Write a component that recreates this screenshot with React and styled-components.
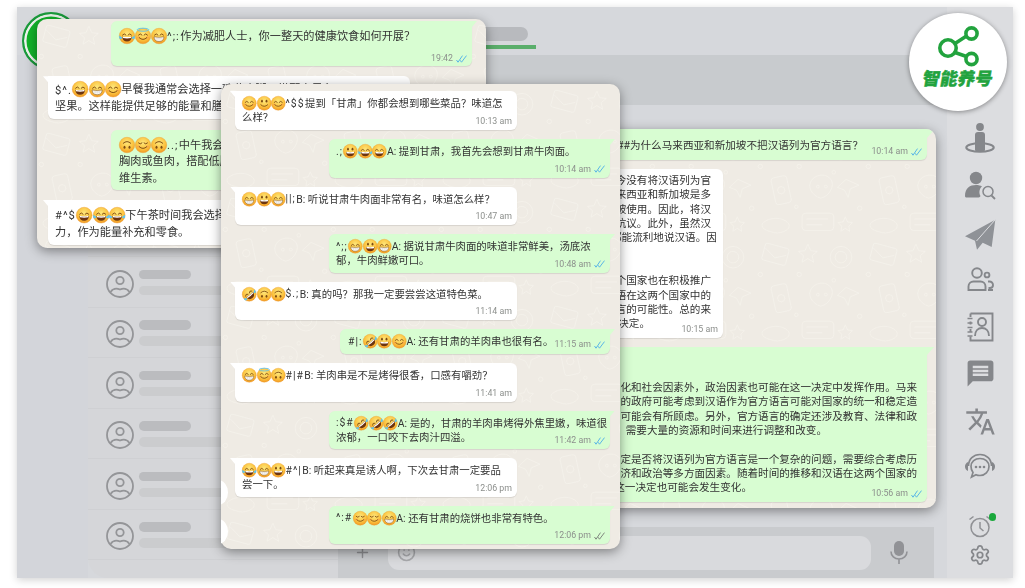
import React from "react";
import styled, { createGlobalStyle } from "styled-components";
import { MdMessage, MdTranslate } from "react-icons/md";
import { Settings, Plus, Smile } from "lucide-react";

const Global = createGlobalStyle`
  html, body { margin: 0; padding: 0; background: #fff; overflow: hidden; }
  * { box-sizing: border-box; }
`;

const Page = styled.div`
  position: relative; width: 1025px; height: 588px; overflow: hidden; background: #fff;
  padding: 7px 12px 10px 17px;
  font-family: Roboto, "Noto Sans CJK SC", sans-serif; color: #333;
`;
const Frame = styled.div`
  display: flex; height: 100%; background: #d6d8dc;
  box-shadow: 0 2px 8px rgba(0,0,0,.18);
`;
const Main = styled.div`display: flex; flex-direction: column; flex: 1; min-width: 0;`;
const TopBar = styled.div`position: relative; height: 48px; flex: none; background: #d6d8dc;`;
const ProfileRing = styled.div`
  position: absolute; left: 5px; top: 5px; width: 58px; height: 58px; border-radius: 50%;
  background: #12b42a; border: 2.500px solid #1b9a3c; box-shadow: inset 0 0 0 2.500px #eef4ef; z-index: 1;
`;
const TitlePill = styled.div`
  position: absolute; left: 420px; top: 20px; width: 91px; height: 14px; border-radius: 7px; background: #b8babe;
`;
const TitleLine = styled.div`
  position: absolute; left: 420px; top: 38px; width: 99px; height: 4px; background: #5aae6b;
`;
const Body = styled.div`display: flex; flex: 1; min-height: 0;`;
const LeftStrip = styled.div`width: 71px; flex: none; background: #d3d5da;`;
const ListPanel = styled.div`
  width: 250px; flex: none; background: #d5d6d9; border-bottom-left-radius: 20px; overflow: hidden;
`;
const Row = styled.div`
  height: 50.500px; display: flex; align-items: center; gap: 5px; padding: 4px 0 0 18px;
  border-bottom: 1px solid #cfd0d3;
`;
const Bars = styled.div`display: flex; flex-direction: column; gap: 6.500px; margin-top: -3px;`;
const NameBar = styled.div`width: 52px; height: 9.500px; border-radius: 5px; background: #bbbcbf;`;
const MsgBar = styled.div`width: 150px; height: 9.500px; border-radius: 5px; background: #cbccce;`;
const ChatPanel = styled.div`display: flex; flex-direction: column; flex: 1; min-width: 0;`;
const ChatHeader = styled.div`height: 50px; flex: none; background: #c8cbce;`;
const ChatSpace = styled.div`flex: 1;`;
const Composer = styled.div`
  height: 51px; flex: none; margin-right: 13px; background: #c9cbce; display: flex; align-items: center;
  padding: 0 20px 0 16px; color: #8f9093;
`;
const Field = styled.div`
  width: 483px; height: 34px; margin-left: 17px; border-radius: 11px; background: #d9dadd; display: flex; align-items: center;
  padding-left: 9px; margin-right: 19px;
`;
const Rail = styled.div`
  width: 66px; flex: none; background: #dcdde0; display: flex; flex-direction: column; align-items: center;
  padding: 115px 0 12px; color: #8a8b8f;
`;
const RailSlot = styled.div`height: 47.300px; flex: none; display: flex; justify-content: center; align-items: flex-start;`;
const RailBottom = styled.div`margin-top: auto; display: flex; flex-direction: column; align-items: center; gap: 6px;`;
const AlarmWrap = styled.div`position: relative; height: 24px; display: flex;`;
const AlarmDot = styled.div`
  position: absolute; right: -4px; top: -1px; width: 7.500px; height: 7.500px; border-radius: 50%; background: #1aa83c;
`;

const LogoBadge = styled.div`
  position: absolute; left: 909px; top: 13px; width: 98px; height: 98px; border-radius: 50%; background: #fff;
  box-shadow: 0 1px 5px rgba(0,0,0,.4); display: flex; flex-direction: column; align-items: center; z-index: 6;
  padding-top: 13px; color: #22a33e;
`;
const LogoText = styled.div`
  margin-top: 1px; font: 900 17.500px/20px "Noto Sans CJK SC", sans-serif; transform: skewX(-10deg); white-space: nowrap;
  -webkit-text-stroke: .4px #22a33e;
`;

const Window = styled.div`
  position: absolute; background: #efebe4; border-radius: 10px; overflow: hidden;
  box-shadow: 0 3px 12px rgba(0,0,0,.42); display: flex; flex-direction: column; filter: blur(.35px);
`;
const WindowA = styled(Window)`
  left: 37px; top: 19px; width: 449px; height: 229px; z-index: 2; padding: 2px 14px 0 5px; gap: 10.300px;
  font-size: 11.200px; line-height: 16.600px;
`;
const WindowB = styled(Window)`
  left: 221px; top: 84px; width: 399px; height: 465px; z-index: 4; padding: 7px 10px 0 10px; gap: 9px;
  font-size: 10.400px; line-height: 14.500px;
`;
const WindowC = styled(Window)`
  left: 540px; top: 129px; width: 396px; height: 379px; z-index: 3; padding: 0 0 0 12px; gap: 9px;
  font-size: 10.600px; line-height: 14.350px;
`;
const WallSvg = styled.svg`position: absolute; inset: 0; width: 100%; height: 100%;`;

const Bubble = styled.div`
  position: relative; flex: none; align-self: ${p => (p.$me ? "flex-end" : "flex-start")};
  width: ${p => p.$w}px; height: ${p => p.$h}px; margin-left: ${p => p.$ml || 0}px;
  margin-right: ${p => p.$mr || 0}px;
  padding: ${p => p.$pt ?? 5}px ${p => p.$pr ?? 7}px 0 ${p => p.$pl ?? 7}px;
  background: ${p => (p.$me ? "#d8fdd2" : "#fff")};
  border-radius: ${p => (p.$me ? "6px 0 6px 6px" : "0 6px 6px 6px")};
  box-shadow: 0 1px 1px rgba(0,0,0,.1);
  white-space: nowrap;
  &::before {
    content: ""; position: absolute; top: 0; width: ${p => p.$tail || 5}px; height: ${p => (p.$tail || 5) + 1}px;
    background: inherit;
    ${p => (p.$me
      ? `left: 100%; clip-path: polygon(0 0, 100% 0, 0 100%);`
      : `right: 100%; clip-path: polygon(0 0, 100% 0, 100% 100%);`)}
  }
`;
const Tag = styled.span`letter-spacing: 1px; margin-right: .5px;`;
const Stamp = styled.div`
  position: absolute; right: 5px; bottom: ${p => p.$b ?? 3}px; display: flex; align-items: center; gap: 3px;
  font: 400 8.800px/11px Roboto, "Noto Sans", sans-serif; color: #8c8f8c;
`;
const Line = styled.div`
  text-align: right; padding-right: ${p => p.$end || 0}px; min-height: 14.350px; white-space: nowrap;
`;
const EmojiSvg = styled.svg`
  display: inline-block; vertical-align: -4px; width: ${p => p.$s}px; height: ${p => p.$s}px; overflow: visible;
`;
const Defs = styled.svg`position: absolute; width: 0; height: 0;`;
const GlyphStub = styled.div`
  position: absolute; left: 209px; width: 19px; height: 25px; border-radius: 50%; background: #fff; z-index: 5;
  top: ${p => p.$top}px; clip-path: inset(0 0 0 12px);
`;

function Wallpaper({ id }) {
  const s = { fill: "none", stroke: "#f5f2ec", strokeWidth: 1 };
  return (
    <WallSvg aria-hidden="true">
      <defs>
        <pattern id={id} width="150" height="150" patternUnits="userSpaceOnUse" patternTransform="scale(.72)">
          <g {...s}>
            <rect x="10" y="12" width="34" height="24" rx="3" transform="rotate(15 27 24)" />
            <path d="M12 18l15 11 15-6" transform="rotate(10 27 24)" />
            <path d="M72 10l4 9 9 1-7 6 2 9-8-5-8 5 2-9-7-6 9-1z" />
            <circle cx="118" cy="28" r="15" />
            <circle cx="118" cy="28" r="8" />
            <rect x="24" y="66" width="22" height="38" rx="4" transform="rotate(-12 35 85)" />
            <circle cx="35" cy="85" r="5" />
            <path d="M78 70c8-8 20-8 26 0s-2 24-14 26c-12-3-20-16-12-26z" />
            <circle cx="86" cy="80" r="2" /><circle cx="97" cy="80" r="2" />
            <path d="M125 70l18 8-12 5-3 12-5-10-10-4z" />
            <path d="M10 130c10-8 26-8 34 0s-8 16-18 14-22-6-16-14z" />
            <path d="M70 125h30M70 133h22" />
            <rect x="64" y="117" width="44" height="24" rx="5" />
            <path d="M124 122l3 7 7 1-5 5 1 7-6-4-6 4 1-7-5-5 7-1z" />
            <circle cx="6" cy="52" r="3" /><circle cx="60" cy="52" r="3" /><circle cx="108" cy="60" r="2.500" />
            <circle cx="56" cy="108" r="2.500" /><circle cx="144" cy="110" r="3" />
          </g>
        </pattern>
      </defs>
      <rect width="100%" height="100%" fill={`url(#${id})`} />
    </WallSvg>
  );
}

function Emoji({ t, s = 14.5 }) {
  const ink = "#7b4a12";
  const eyesUp = <path d="M7 14q3.500-5 7 0M18 14q3.500-5 7 0" fill="none" stroke={ink} strokeWidth="1.900" strokeLinecap="round" />;
  const eyesDown = <path d="M7 12q3.500 4 7 0M18 12q3.500 4 7 0" fill="none" stroke={ink} strokeWidth="1.900" strokeLinecap="round" />;
  const eyesDot = <g fill={ink}><ellipse cx="11" cy="11.500" rx="2" ry="3" /><ellipse cx="21" cy="11.500" rx="2" ry="3" /></g>;
  const teeth = (
    <g>
      <path d="M6 17.500q10 2.400 20 0q-.6 9.500-10 9.500t-10-9.500z" fill="#fff" stroke={ink} strokeWidth="1.100" />
      <path d="M7 21.500h18M12 18.600v7.800M16 18.900v8M20 18.600v7.800" stroke="#c9c3b5" strokeWidth=".8" />
    </g>
  );
  const open = (
    <g>
      <path d="M6.500 17q9.500 2.400 19 0q-.6 10-9.500 10t-9.500-10z" fill="#6d3410" />
      <path d="M7.400 17.200q8.600 2 17.200 0l-.5 3q-8.100 1.600-16.200 0z" fill="#fff" />
    </g>
  );
  const smile = <path d="M8.500 19.500q7.500 7 15 0" fill="none" stroke={ink} strokeWidth="1.900" strokeLinecap="round" />;
  const tears = (
    <g fill="#5fc4ee">
      <path d="M1 15q-2 6 1.500 7t4-2.500z" />
      <path d="M31 15q2 6-1.500 7t-4-2.500z" />
    </g>
  );
  const blush = <g fill="#f58f50" opacity=".55"><ellipse cx="7" cy="19" rx="3" ry="1.800" /><ellipse cx="25" cy="19" rx="3" ry="1.800" /></g>;
  const face = <circle cx="16" cy="16" r="15.500" fill="url(#emojiFace)" stroke="#ea9a2e" strokeWidth=".8" />;
  const parts = {
    grin: <>{eyesUp}{teeth}</>,
    beam: <>{eyesUp}{open}</>,
    grinning: <>{eyesDot}{open}</>,
    smile: <>{blush}{eyesUp}{smile}</>,
    slight: <>{eyesDot}{smile}</>,
    joy: <>{eyesUp}{open}{tears}</>,
    halo: <>{blush}{eyesUp}{smile}<ellipse cx="16" cy="3.500" rx="11.500" ry="3" fill="none" stroke="#5fc4ee" strokeWidth="1.800" /></>,
    upside: <g transform="rotate(180 16 16)">{eyesDot}{smile}</g>,
    relieved: <>{blush}{eyesDown}{smile}</>,
    rofl: <g transform="rotate(-40 16 16)">{eyesUp}{open}{tears}</g>,
  };
  return (
    <EmojiSvg $s={s} viewBox="0 0 32 32" aria-hidden="true">
      {face}
      {parts[t]}
    </EmojiSvg>
  );
}
const Emojis = ({ list, s }) => <>{list.map((t, i) => <Emoji key={i} t={t} s={s} />)}</>;

function Ticks({ gray }) {
  return (
    <svg width="11" height="8" viewBox="0 0 11 8" aria-hidden="true">
      <path d="M.5 5l1.500 2.200L6.500.6M4 5.200l1.500 2L10.500.6" fill="none" stroke={gray ? "#7f867e" : "#5ab6e6"} strokeWidth="1" />
    </svg>
  );
}
const Time = ({ v, me, gray, b }) => (
  <Stamp $b={b}>{v}{me && <Ticks gray={gray} />}</Stamp>
);

const RowAvatar = () => (
  <svg width="28" height="28" viewBox="0 0 28 28" fill="none" stroke="#949598" strokeWidth="1.800" aria-hidden="true">
    <circle cx="14" cy="14" r="13" />
    <circle cx="14" cy="10.500" r="3.700" />
    <path d="M4.500 22c2-3.500 6-4 9.500-2.500 3.500-1.500 7.500-1 9.500 2.500" />
  </svg>
);

const MicGlyph = () => (
  <svg width="18" height="23" viewBox="0 0 18 23" aria-hidden="true">
    <rect x="4" y="0" width="10" height="15" rx="5" fill="#919296" />
    <path d="M1 10.500c0 4.500 3.500 7.500 8 7.500s8-3 8-7.500M9 18v5" fill="none" stroke="#919296" strokeWidth="1.600" />
  </svg>
);
const IconPerson = () => (
  <svg width="32" height="32" viewBox="0 0 32 32" fill="#85878b" aria-hidden="true">
    <circle cx="16" cy="5" r="3.900" />
    <ellipse cx="16" cy="25.500" rx="13.700" ry="4.300" fill="none" stroke="#85878b" strokeWidth="2.100" />
    <path d="M11 13a3 3 0 0 1 3-3h4a3 3 0 0 1 3 3v15a1 1 0 0 1-1 1h-8a1 1 0 0 1-1-1z" />
  </svg>
);
const IconSearchUser = () => (
  <svg width="32" height="32" viewBox="0 0 32 32" fill="#85878b" aria-hidden="true">
    <circle cx="12" cy="9" r="6.200" />
    <path d="M1 27c0-8 5-11 11-11 2.500 0 4.500.5 6 1.500-2.500 2-3.500 6-1.500 9.500-.5 1-1.500 1.500-3 1.500H3c-1.200 0-2-.5-2-1.500z" />
    <circle cx="24" cy="22.500" r="5" fill="none" stroke="#85878b" strokeWidth="1.500" />
    <path d="M27.500 26.500l3.500 3.500" stroke="#85878b" strokeWidth="1.800" fill="none" />
  </svg>
);
const IconSend = () => (
  <svg width="32" height="33" viewBox="0 0 32 33" aria-hidden="true">
    <path d="M31.300 2.700L1 19.300l10 4.400 2 9 5.700-7 9 4.300z" fill="#8f9297" />
    <path d="M31 3L12.500 24" stroke="#dcdde0" strokeWidth="1" />
  </svg>
);
const IconUsers = () => (
  <svg width="32" height="32" viewBox="0 0 32 32" fill="none" stroke="#85878b" strokeWidth="1.900" aria-hidden="true">
    <circle cx="13" cy="9" r="4.800" />
    <circle cx="23" cy="11" r="2.400" />
    <path d="M4.500 26v-3.500a5 5 0 0 1 5-5h7a5 5 0 0 1 5 5V26z" />
    <path d="M24 17.500h1.500a3.500 3.500 0 0 1 3.500 3.500 3 3 0 0 1-3 3h-1.500M24 26h5" />
  </svg>
);
const IconContacts = () => (
  <svg width="32" height="32" viewBox="0 0 32 32" fill="none" stroke="#85878b" strokeWidth="1.900" aria-hidden="true">
    <path d="M6.500 2.500h22v27h-22v-4M6.500 21v-3M6.500 13.500v-3M6.500 6v-3.500" />
    <path d="M3.500 7.500h5M3.500 12h5M3.500 16.500h5M3.500 21h5M3.500 25h5" strokeWidth="1.400" />
    <circle cx="18" cy="11" r="4" />
    <path d="M11 25c0-5 3-8 7-8s7 3 7 8" />
  </svg>
);
const IconHeadset = () => (
  <svg width="32" height="26" viewBox="0 0 32 26" fill="none" stroke="#85878b" strokeWidth="1.700" aria-hidden="true">
    <path d="M4.500 13C4.500 6 9.500 1.500 16 1.500S27.500 6 27.500 13" />
    <path d="M9 19.500c-1.500-2-2-4-2-6C7 8.500 11 5.500 16 5.500s9 3 9 8-4 9-9 9c-1.500 0-3-.3-4-.8L7.500 24z" />
    <path d="M4 9c-2 1-3 2.500-3 4.500S2 17 4 18zM28 9c2 1 3 2.500 3 4.500S30 17 28 18z" fill="#85878b" stroke="none" />
    <g fill="#85878b" stroke="none"><circle cx="12" cy="14" r="1.300" /><circle cx="16" cy="14" r="1.300" /><circle cx="20" cy="14" r="1.300" /></g>
  </svg>
);
const IconAlarm = () => (
  <svg width="24" height="24" viewBox="0 0 24 24" fill="none" stroke="#8f9094" strokeWidth="1.500" aria-hidden="true">
    <circle cx="12" cy="13.500" r="9" />
    <path d="M12 8v6l3.500 3M1.500 5.500L5.500 2.500M22.500 5.500L18.500 2.500" />
  </svg>
);
const ShareMark = () => (
  <svg width="46" height="41" viewBox="0 0 46 41" fill="none" stroke="#22a33e" strokeWidth="3.600" aria-hidden="true">
    <circle cx="13" cy="22" r="8.200" />
    <circle cx="36.500" cy="7.500" r="5.600" />
    <circle cx="36.500" cy="33" r="5.600" />
    <path d="M20 17.500L31.500 10M20 26.500L31.500 30.500" />
  </svg>
);

const listRows = Array.from({ length: 10 });

export default function App() {
  return (
    <Page>
      <Global />
      <Defs aria-hidden="true">
        <defs>
          <radialGradient id="emojiFace" cx="50%" cy="35%" r="70%">
            <stop offset="0" stopColor="#fde67a" />
            <stop offset=".6" stopColor="#fbc23e" />
            <stop offset="1" stopColor="#f08f1e" />
          </radialGradient>
        </defs>
      </Defs>

      <Frame>
        <Main>
          <TopBar>
            <ProfileRing />
            <TitlePill />
            <TitleLine />
          </TopBar>
          <Body>
            <LeftStrip />
            <ListPanel>
              {listRows.map((_, i) => (
                <Row key={i}>
                  <RowAvatar />
                  <Bars><NameBar /><MsgBar /></Bars>
                </Row>
              ))}
            </ListPanel>
            <ChatPanel>
              <ChatHeader />
              <ChatSpace />
              <Composer>
                <Plus size={17} strokeWidth={2} />
                <Field><Smile size={19} strokeWidth={2} color="#a9aaad" /></Field>
                <MicGlyph />
              </Composer>
            </ChatPanel>
          </Body>
        </Main>
        <Rail>
          <RailSlot><IconPerson /></RailSlot>
          <RailSlot><IconSearchUser /></RailSlot>
          <RailSlot><IconSend /></RailSlot>
          <RailSlot><IconUsers /></RailSlot>
          <RailSlot><IconContacts /></RailSlot>
          <RailSlot><MdMessage size={31} color="#85878b" /></RailSlot>
          <RailSlot><MdTranslate size={31} color="#85878b" /></RailSlot>
          <RailSlot><IconHeadset /></RailSlot>
          <RailBottom>
            <AlarmWrap><IconAlarm /><AlarmDot /></AlarmWrap>
            <Settings size={22} strokeWidth={1.9} color="#85878b" />
          </RailBottom>
        </Rail>
      </Frame>

      <WindowA>
        <Wallpaper id="wallA" />
        <Bubble $me $w={361} $h={45} $pl={8} $pt={7}>
          <Emojis s={16} list={["joy", "halo", "grin"]} /><Tag>^;:</Tag>作为减肥人士，你一整天的健康饮食如何开展？
          <Time v="19:42" me b={2} />
        </Bubble>
        <Bubble $w={362} $h={43} $ml={6} $pt={5}>
          <Tag>$^.</Tag><Emojis s={16.3} list={["beam", "grin", "smile"]} />早餐我通常会选择一碗燕麦粥，搭配水果和<br />坚果。这样能提供足够的能量和膳食纤维，让<br />
        </Bubble>
        <Bubble $me $w={361} $h={60} $pl={8} $pt={7}>
          <Emojis s={16} list={["upside", "relieved", "upside"]} /><Tag>..;</Tag>中午我会选择清淡的午餐，例如鸡<br />胸肉或鱼肉，搭配低脂蔬菜，补充蛋白质和<br />维生素。
        </Bubble>
        <Bubble $w={362} $h={45} $ml={6} $pt={7}>
          <Tag>#^$</Tag><Emojis s={16.3} list={["beam", "joy", "joy"]} />下午茶时间我会选择水果或坚果，补充体<br />力，作为能量补充和零食。
        </Bubble>
      </WindowA>

      <WindowC>
        <Wallpaper id="wallC" />
        <Bubble $me $w={387} $h={31} $mr={9} $tail={8} $pt={10}>
          <Line $end={57}>##为什么马来西亚和新加坡不把汉语列为官方语言？</Line>
          <Time v="10:14 am" me b={3} />
        </Bubble>
        <Bubble $w={171} $h={169} $pr={12} $pl={6} $pt={5}>
          <Line>新加坡至今没有将汉语列为官</Line>
          <Line>方语言。马来西亚和新加坡是多</Line>
          <Line>种语言被使用。因此，将汉</Line>
          <Line>语可能引发抗议。此外，虽然汉</Line>
          <Line>并非所有人都能流利地说汉语。因</Line>
          <Line />
          <Line />
          <Line>这两个国家也在积极推广</Line>
          <Line>同时，英语在这两个国家中的</Line>
          <Line>官方语言的可能性。总的来</Line>
          <Line $end={61}>的决定。</Line>
          <Time v="10:15 am" b={3} />
        </Bubble>
        <Bubble $me $w={375} $h={155} $mr={9} $tail={7} $pr={10} $pl={5} $pt={34}>
          <Line>化和社会因素外，政治因素也可能在这一决定中发挥作用。马来</Line>
          <Line>的政府可能考虑到汉语作为官方语言可能对国家的统一和稳定造</Line>
          <Line>可能会有所顾虑。另外，官方语言的确定还涉及教育、法律和政</Line>
          <Line $end={90}>需要大量的资源和时间来进行调整和改变。</Line>
          <Line />
          <Line>定是否将汉语列为官方语言是一个复杂的问题，需要综合考虑历</Line>
          <Line>济和政治等多方面因素。随着时间的推移和汉语在这两个国家的</Line>
          <Line $end={165}>这一决定也可能会发生变化。</Line>
          <Time v="10:56 am" me b={3} />
        </Bubble>
      </WindowC>

      <WindowB>
        <Wallpaper id="wallB" />
        <Bubble $w={282} $h={39} $ml={4}>
          <Emojis list={["smile", "slight", "smile"]} /><Tag>^$$</Tag>提到「甘肃」你都会想到哪些菜品？味道怎<br />么样？
          <Time v="10:13 am" />
        </Bubble>
        <Bubble $me $w={281} $h={38.5}>
          <Tag>.;</Tag><Emojis list={["grinning", "joy", "beam"]} />A: 提到甘肃，我首先会想到甘肃牛肉面。
          <Time v="10:14 am" me />
        </Bubble>
        <Bubble $w={282} $h={38.5} $ml={4}>
          <Emojis list={["grin", "grinning", "grin"]} /><Tag>||;</Tag>B: 听说甘肃牛肉面非常有名，味道怎么样？
          <Time v="10:47 am" />
        </Bubble>
        <Bubble $me $w={281} $h={38.5}>
          <Tag>^;;</Tag><Emojis list={["grin", "grinning", "grin"]} />A: 据说甘肃牛肉面的味道非常鲜美，汤底浓<br />郁，牛肉鲜嫩可口。
          <Time v="10:48 am" me />
        </Bubble>
        <Bubble $w={282} $h={38.5} $ml={4}>
          <Emojis list={["rofl", "upside", "upside"]} /><Tag>$.;</Tag>B: 真的吗？那我一定要尝尝这道特色菜。
          <Time v="11:14 am" />
        </Bubble>
        <Bubble $me $w={270} $h={25} $pl={8}>
          <Tag>#|:</Tag><Emojis list={["rofl", "grinning", "smile"]} />A: 还有甘肃的羊肉串也很有名。
          <Time v="11:15 am" me b={4} />
        </Bubble>
        <Bubble $w={282} $h={38.5} $ml={4}>
          <Emojis list={["grin", "halo", "upside"]} /><Tag>#|#</Tag>B: 羊肉串是不是烤得很香，口感有嚼劲？
          <Time v="11:41 am" />
        </Bubble>
        <Bubble $me $w={281} $h={38.5}>
          <Tag>:$#</Tag><Emojis list={["rofl", "rofl", "rofl"]} />A: 是的，甘肃的羊肉串烤得外焦里嫩，味道很<br />浓郁，一口咬下去肉汁四溢。
          <Time v="11:42 am" me />
        </Bubble>
        <Bubble $w={282} $h={38.5} $ml={4}>
          <Emojis list={["joy", "grin", "grinning"]} /><Tag>#^|</Tag>B: 听起来真是诱人啊，下次去甘肃一定要品<br />尝一下。
          <Time v="12:06 pm" />
        </Bubble>
        <Bubble $me $w={281} $h={38.5}>
          <Tag>^:#</Tag><Emojis list={["relieved", "relieved", "grin"]} />A: 还有甘肃的烧饼也非常有特色。
          <Time v="12:06 pm" me gray />
        </Bubble>
      </WindowB>

      <GlyphStub $top={480} />
      <GlyphStub $top={519} />

      <LogoBadge>
        <ShareMark />
        <LogoText>智能养号</LogoText>
      </LogoBadge>
    </Page>
  );
}
